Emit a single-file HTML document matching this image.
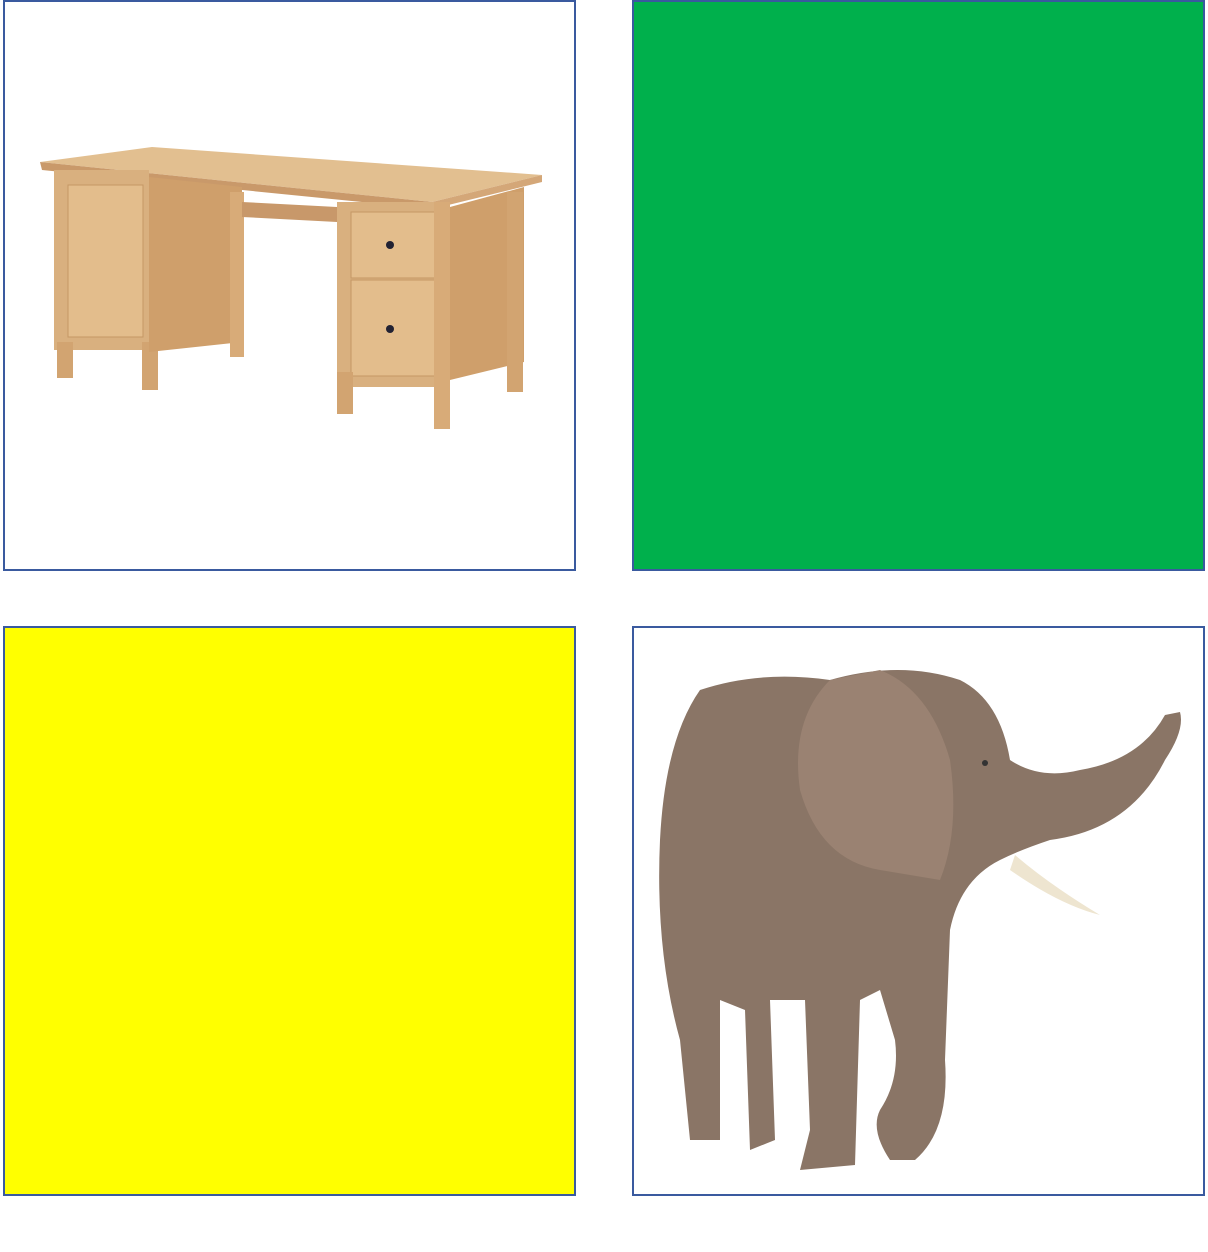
<!DOCTYPE html>
<html><head><style>
html,body{margin:0;padding:0;background:#fff;width:1208px;height:1252px;overflow:hidden;position:relative}
.b{position:absolute;box-sizing:border-box;border:2px solid #3a5a9f}
svg{position:absolute;left:0;top:0}
</style></head><body>
<div class="b" style="left:3px;top:0;width:573px;height:571px;background:#fff">
<svg width="569" height="567" viewBox="3 0 569 567">
<!-- desk -->
<polygon points="38,160 150,145 540,173 430,200" fill="#e2bf90"/>
<polygon points="38,160 430,200 430,207 40,168" fill="#c9996a"/>
<polygon points="430,200 540,173 540,180 430,207" fill="#d4a778"/>
<rect x="52" y="168" width="95" height="180" fill="#d9b07f"/>
<rect x="66" y="183" width="75" height="152" fill="#e3bd8c" stroke="#c59765"/>
<rect x="55" y="340" width="16" height="36" fill="#d2a471"/>
<rect x="140" y="340" width="16" height="48" fill="#d2a471"/>
<polygon points="147,175 240,185 240,340 147,350" fill="#cf9f6b"/>
<rect x="228" y="190" width="14" height="165" fill="#d8ab78"/>
<polygon points="240,200 335,205 335,220 240,215" fill="#c8986a"/>
<rect x="335" y="200" width="100" height="185" fill="#d9b07f"/>
<rect x="349" y="210" width="85" height="66" fill="#e3bd8c" stroke="#c59765"/>
<rect x="349" y="278" width="85" height="96" fill="#e3bd8c" stroke="#c59765"/>
<circle cx="388" cy="243" r="4" fill="#223"/>
<circle cx="388" cy="327" r="4" fill="#223"/>
<rect x="335" y="370" width="16" height="42" fill="#d2a471"/>
<rect x="432" y="200" width="16" height="227" fill="#d8ab78"/>
<polygon points="448,205 522,185 522,360 448,378" fill="#cf9f6b"/>
<rect x="505" y="190" width="16" height="200" fill="#d2a471"/>
</svg></div>
<div class="b" style="left:632px;top:0;width:573px;height:571px;background:#00b04c"></div>
<div class="b" style="left:3px;top:626px;width:573px;height:570px;background:#ffff00"></div>
<div class="b" style="left:632px;top:626px;width:573px;height:570px;background:#fff">
<svg width="569" height="566" viewBox="634 628 569 566">
<g fill="#8a7566">
<path d="M700,690 Q760,670 830,680 Q900,660 960,680 Q1000,700 1010,760 Q1040,780 1080,770 Q1140,760 1165,715 L1180,712 Q1185,730 1165,760 Q1130,830 1050,840 Q1020,850 1000,860 Q960,880 950,930 L945,1060 Q950,1130 915,1160 L890,1160 Q870,1130 880,1110 Q900,1080 895,1040 L880,990 L860,1000 L855,1165 L800,1170 L810,1130 L805,1000 L770,1000 L775,1140 L750,1150 L745,1010 L720,1000 L720,1140 L690,1140 L680,1040 Q655,950 660,840 Q665,740 700,690 Z"/>
</g>
<path d="M830,680 Q790,720 800,790 Q820,860 880,870 L940,880 Q960,830 950,760 Q930,690 880,670 Z" fill="#9a8272"/>
<path d="M1015,855 Q1050,885 1100,915 Q1060,905 1010,870 Z" fill="#eee5d0"/>
<circle cx="985" cy="763" r="3" fill="#333"/>
</svg></div>
</body></html>
